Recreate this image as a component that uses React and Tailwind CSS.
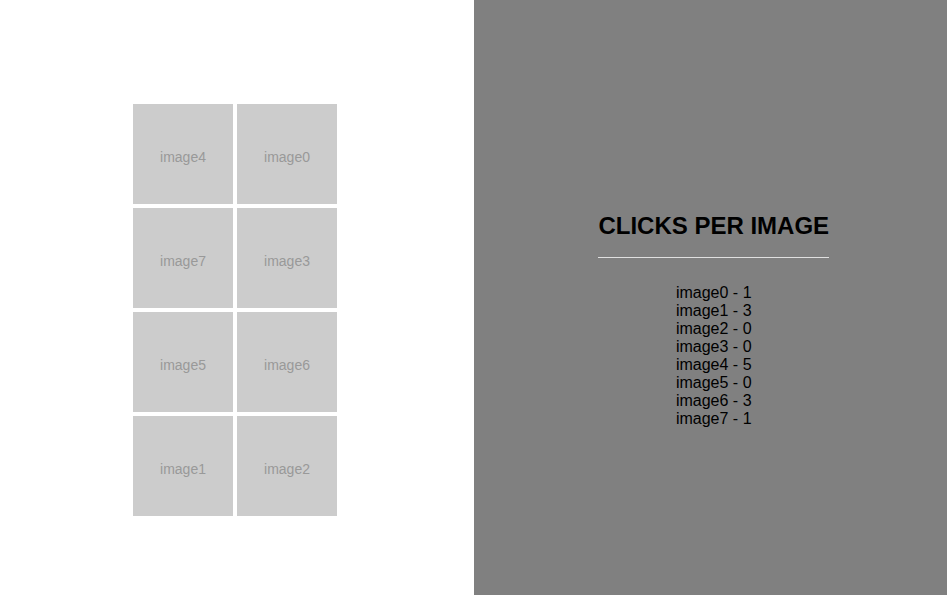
const grid = [
  ['image4', 'image0'],
  ['image7', 'image3'],
  ['image5', 'image6'],
  ['image1', 'image2'],
]

const clicks = [
  ['image0', 1],
  ['image1', 3],
  ['image2', 0],
  ['image3', 0],
  ['image4', 5],
  ['image5', 0],
  ['image6', 3],
  ['image7', 1],
]

export default function App() {
  return (
    <div
      className="flex w-full h-[595px]"
      style={{ fontFamily: '"Liberation Sans", Arial, sans-serif' }}
    >
      <div className="w-1/2 bg-white pt-[104px] pl-[133px]">
        <div className="grid grid-cols-[100px_100px] gap-[4px] w-[204px]">
          {grid.flat().map((name) => (
            <div
              key={name}
              className="w-[100px] h-[100px] bg-[#cccccc] flex items-center justify-center pt-[7px] text-[14px] text-[#999999]"
            >
              {name}
            </div>
          ))}
        </div>
      </div>

      <div className="w-1/2 bg-[#808080] flex flex-col items-center pt-[212px] pl-[7px]">
        <h2 className="text-[24px] leading-[28px] font-bold text-black pb-[17px] border-b border-[#e0e0e0]">
          CLICKS PER IMAGE
        </h2>
        <ul className="mt-[26px] text-[16px] leading-[18px] text-black text-center">
          {clicks.map(([name, n]) => (
            <li key={name}>
              {name} - {n}
            </li>
          ))}
        </ul>
      </div>
    </div>
  )
}
